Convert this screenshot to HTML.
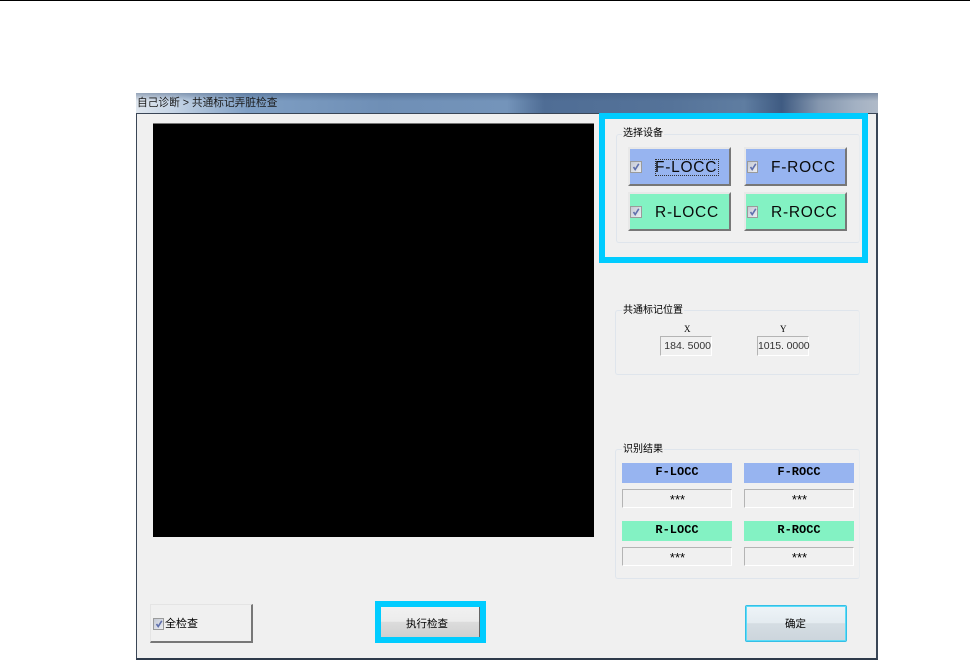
<!DOCTYPE html>
<html lang="zh">
<head>
<meta charset="utf-8">
<style>
html,body{margin:0;padding:0;width:970px;height:660px;overflow:hidden;background:#fff;font-family:"Liberation Sans","Noto Sans CJK SC",sans-serif;color:#000}
div{position:absolute;box-sizing:border-box}
.t{white-space:nowrap;line-height:1}
.title{left:136px;top:93px;width:742px;height:21px;background:linear-gradient(90deg,#dfe6ee 0,#c6d5e6 5%,#7f9fc4 15%,#6f8fb6 33%,#7494ba 50%,#4f6d95 55%,#557399 72%,#5f7da1 82%,#3f5b82 87%,#8496ae 92%,#a3b1c3 97%,#b0bac8 100%)}
.title2{left:136px;top:93px;width:742px;height:8px;background:linear-gradient(180deg,rgba(60,85,120,.45),rgba(60,85,120,0))}
.body{left:136px;top:113px;width:742px;height:547px;background:#f0f0f0;border:1px solid #3a4656;border-top:1px solid #3a4656;border-bottom:2px solid #2e3a4a;border-right:2px solid #3a4656}
.black{left:153px;top:123px;width:441px;height:414px;background:#000;border-top:1px solid #777}
.cy{border:6px solid #00ccff}
.gb{border:1px solid #dfe5ec;border-right-color:#e8ecef;border-radius:3px}
.lg{background:#f0f0f0;font-size:10px;padding:0 1px;height:12px;line-height:12px;white-space:nowrap}
.btn{width:103px;border-top:2px solid #e8e8e8;border-left:2px solid #e8e8e8;border-right:2px solid #777;border-bottom:2px solid #777}
.blue{background:#97b4f0}
.green{background:#83f2c3}
.cb{width:12px;height:12px;background:linear-gradient(135deg,#c4c9d4,#eceef3);border:1px solid #9a9b9b}
.cb svg{position:absolute;left:1px;top:1px;width:8px;height:8px}
.cap{font-size:15.5px;letter-spacing:.75px;font-family:"Liberation Sans",sans-serif;line-height:18px;white-space:nowrap;color:#0a0a0a}
.lab{width:110px;height:20px;text-align:center;font-size:12px;font-weight:bold;line-height:18px;font-family:"Liberation Mono",monospace}
.res{width:110px;height:19px;background:#f0f0f0;border-top:1px solid #b4b4b4;border-left:1px solid #b4b4b4;border-right:1px solid #fff;border-bottom:1px solid #fff;text-align:center;font-size:13px;line-height:20px;padding-left:1px}
.ed{width:52px;height:20px;border-top:1px solid #b4b4b4;border-left:1px solid #b4b4b4;border-right:1px solid #fff;border-bottom:1px solid #fff;font-size:10.5px;line-height:19px;text-align:right;color:#333;white-space:nowrap}
</style>
</head>
<body>
<div style="left:0;top:0;width:970px;height:1px;background:#000"></div>

<div class="title"></div>
<div class="title2"></div>
<div class="t" style="left:137px;top:98px;font-size:10.7px;color:#1a1a1a">自己诊断 &gt; 共通标记弄脏检查</div>
<div class="body"></div>
<div class="black"></div>

<div class="cy" style="left:599px;top:113px;width:269px;height:150px"></div>
<div class="gb" style="left:616px;top:134px;width:244px;height:109px"></div>
<div class="lg" style="left:622px;top:128px">选择设备</div>

<div class="btn blue" style="left:628px;top:147px;height:39px"></div>
<div class="cb" style="left:630px;top:161px"><svg viewBox="0 0 8 8"><path d="M1.5 4 L3.2 6.5 L6.8 0.8" fill="none" stroke="#5f70ad" stroke-width="1.6"/></svg></div>
<div class="cap" style="left:655px;top:159px">F-LOCC</div>
<div style="left:655px;top:159px;width:64px;height:17px;border:1px dotted #333"></div>

<div class="btn blue" style="left:744px;top:147px;height:39px"></div>
<div class="cb" style="left:747px;top:161px;width:11px"><svg viewBox="0 0 8 8"><path d="M1.5 4 L3.2 6.5 L6.8 0.8" fill="none" stroke="#5f70ad" stroke-width="1.6"/></svg></div>
<div class="cap" style="left:771px;top:159px">F-ROCC</div>

<div class="btn green" style="left:628px;top:192px;height:39px"></div>
<div class="cb" style="left:630px;top:206px"><svg viewBox="0 0 8 8"><path d="M1.5 4 L3.2 6.5 L6.8 0.8" fill="none" stroke="#5f70ad" stroke-width="1.6"/></svg></div>
<div class="cap" style="left:655px;top:204px">R-LOCC</div>

<div class="btn green" style="left:744px;top:192px;height:39px"></div>
<div class="cb" style="left:747px;top:206px;width:11px"><svg viewBox="0 0 8 8"><path d="M1.5 4 L3.2 6.5 L6.8 0.8" fill="none" stroke="#5f70ad" stroke-width="1.6"/></svg></div>
<div class="cap" style="left:771px;top:204px">R-ROCC</div>

<div class="gb" style="left:615px;top:310px;width:245px;height:65px"></div>
<div class="lg" style="left:622px;top:305px">共通标记位置</div>
<div class="t" style="left:684px;top:325px;font-size:9px;font-family:'Liberation Serif',serif">X</div>
<div class="t" style="left:780px;top:325px;font-size:9px;font-family:'Liberation Serif',serif">Y</div>
<div class="ed" style="left:660px;top:336px">184. 5000</div>
<div class="ed" style="left:757px;top:336px;letter-spacing:-.1px">1015. 0000</div>

<div class="gb" style="left:615px;top:449px;width:245px;height:130px"></div>
<div class="lg" style="left:622px;top:444px">识别结果</div>
<div class="lab blue" style="left:622px;top:463px">F-LOCC</div>
<div class="lab blue" style="left:744px;top:463px">F-ROCC</div>
<div class="res" style="left:622px;top:489px">***</div>
<div class="res" style="left:744px;top:489px">***</div>
<div class="lab green" style="left:622px;top:521px">R-LOCC</div>
<div class="lab green" style="left:744px;top:521px">R-ROCC</div>
<div class="res" style="left:622px;top:547px">***</div>
<div class="res" style="left:744px;top:547px">***</div>

<div style="left:150px;top:604px;width:103px;height:39px;background:#f0f0f0;border-top:1px solid #e4e4e4;border-left:1px solid #e4e4e4;border-right:2px solid #777;border-bottom:2px solid #777"></div>
<div class="cb" style="left:153px;top:618px;width:11px;height:12px"><svg viewBox="0 0 8 8"><path d="M1.5 4 L3.2 6.5 L6.8 0.8" fill="none" stroke="#5f70ad" stroke-width="1.6"/></svg></div>
<div class="t" style="left:165px;top:619px;font-size:11px">全检查</div>

<div class="cy" style="left:375px;top:601px;width:111px;height:42px"></div>
<div style="left:381px;top:607px;width:99px;height:30px;background:linear-gradient(180deg,#f1f1f1 0,#ececec 48%,#dcdcdc 50%,#d0d0d0 100%);border-right:1px solid #666"></div>
<div class="t" style="left:406px;top:619px;font-size:10.5px">执行检查</div>

<div style="left:745px;top:605px;width:102px;height:37px;border:1px solid #35bfe6;border-radius:2px;background:linear-gradient(180deg,#eef4f8 0,#e4ebf0 48%,#d5dde3 50%,#ccd5dc 100%);box-shadow:inset 0 0 0 1px #5cdcf8"></div>
<div class="t" style="left:785px;top:619px;font-size:10.5px">确定</div>
</body>
</html>
